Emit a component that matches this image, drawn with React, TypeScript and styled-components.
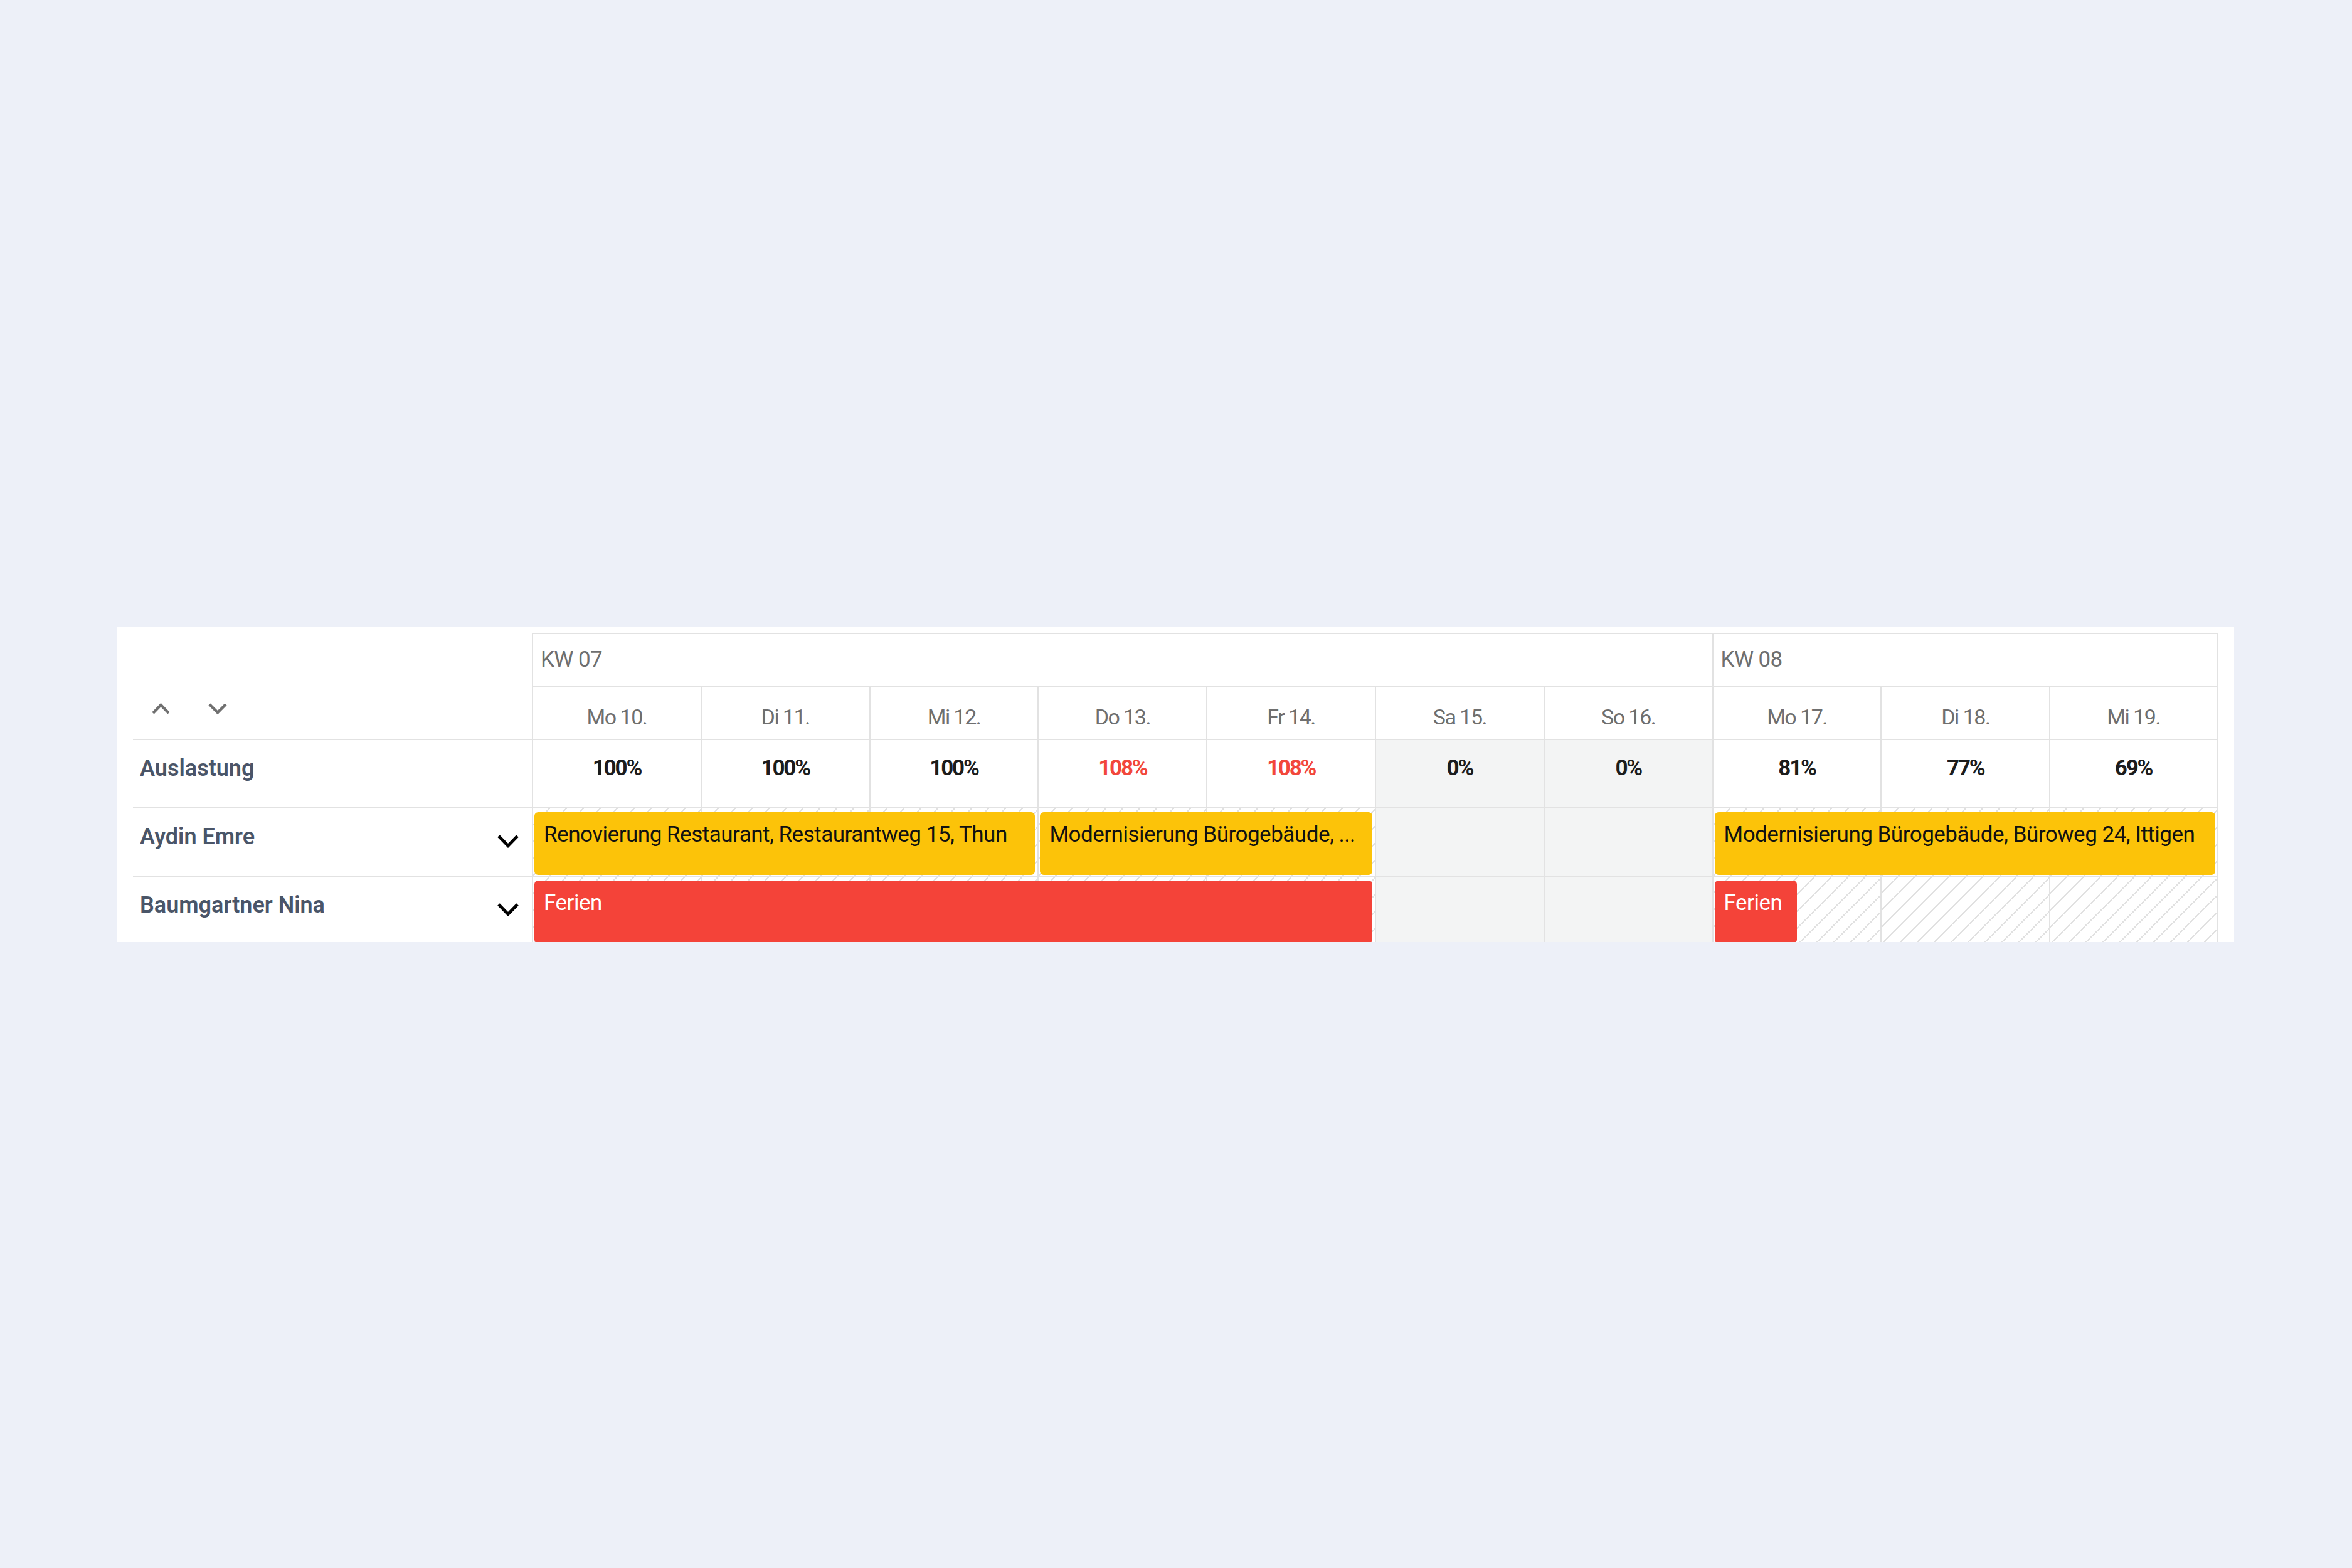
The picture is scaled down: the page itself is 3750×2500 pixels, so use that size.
import React from 'react';
import styled, { createGlobalStyle, css } from 'styled-components';

const LINE = '#e2e2e2';
const WEEKEND = '#f3f4f4';

const GlobalStyle = createGlobalStyle`
  html, body {
    margin: 0;
    padding: 0;
    background: #edf0f8;
  }
  body {
    font-family: Roboto, "Liberation Sans", Arial, sans-serif;
  }
`;

const Page = styled.div`
  box-sizing: border-box;
  min-height: 2500px;
  padding: 999px 188px 0 187px;
`;

const Panel = styled.section`
  box-sizing: border-box;
  background: #ffffff;
  height: 503px;
  overflow: hidden;
  padding: 10px 26px 0 25px;
`;

const Grid = styled.div`
  display: grid;
  grid-template-columns: 636px repeat(10, 268.8px);
  grid-template-rows: 86px 85px 109px 109px 109px;
`;

const Corner = styled.div`
  grid-column: 1;
  grid-row: 1 / span 2;
  box-sizing: border-box;
  border-bottom: 2px solid ${LINE};
  display: flex;
  align-items: flex-end;
  gap: 59px;
  padding: 0 0 38px 29px;
`;

const SortButton = styled.button`
  display: block;
  border: 0;
  padding: 0;
  margin: 0;
  background: none;
  cursor: pointer;
  line-height: 0;
  svg {
    display: block;
  }
`;

const WeekCell = styled.div<{ $start: number; $span: number; $last?: boolean }>`
  grid-row: 1;
  grid-column: ${(p) => p.$start} / span ${(p) => p.$span};
  box-sizing: border-box;
  border-top: 2px solid ${LINE};
  border-left: 2px solid ${LINE};
  border-bottom: 2px solid ${LINE};
  ${(p) =>
    p.$last &&
    css`
      border-right: 2px solid ${LINE};
    `}
  display: flex;
  align-items: center;
  padding-left: 12px;
  font-size: 35px;
  letter-spacing: -0.6px;
  line-height: 1.2;
  color: #6f6f6f;
`;

const DayCell = styled.div<{ $col: number; $last?: boolean }>`
  grid-row: 2;
  grid-column: ${(p) => p.$col};
  box-sizing: border-box;
  border-left: 2px solid ${LINE};
  border-bottom: 2px solid ${LINE};
  ${(p) =>
    p.$last &&
    css`
      border-right: 2px solid ${LINE};
    `}
  display: flex;
  align-items: center;
  justify-content: center;
  padding-top: 14px;
  font-size: 34px;
  letter-spacing: -1.5px;
  line-height: 1.2;
  color: #6f6f6f;
`;

const RowLabel = styled.div<{ $row: number }>`
  grid-row: ${(p) => p.$row};
  grid-column: 1;
  box-sizing: border-box;
  border-bottom: 2px solid ${LINE};
  display: flex;
  align-items: flex-start;
  justify-content: space-between;
  padding: 24px 20px 0 11px;
  font-size: 36px;
  line-height: 1.2;
  font-weight: 600;
  color: #4a5568;
`;

const ExpandButton = styled.button`
  display: block;
  border: 0;
  padding: 0;
  margin: 17px 0 0;
  background: none;
  cursor: pointer;
  line-height: 0;
  svg {
    display: block;
  }
`;

const Cell = styled.div<{ $row: number; $col: number; $weekend?: boolean; $hatch?: boolean; $last?: boolean }>`
  grid-row: ${(p) => p.$row};
  grid-column: ${(p) => p.$col};
  box-sizing: border-box;
  border-left: 2px solid ${LINE};
  border-bottom: 2px solid ${LINE};
  ${(p) =>
    p.$last &&
    css`
      border-right: 2px solid ${LINE};
    `}
  background: ${(p) =>
    p.$weekend
      ? WEEKEND
      : p.$hatch
      ? `repeating-linear-gradient(135deg, transparent 0 17.4px, #e1e1e1 17.4px 19.1px)`
      : '#ffffff'};
`;

const LoadCell = styled(Cell)<{ $over?: boolean }>`
  display: flex;
  align-items: flex-start;
  justify-content: center;
  padding-top: 24px;
  font-size: 35px;
  letter-spacing: -2.2px;
  line-height: 1.2;
  font-weight: 700;
  color: ${(p) => (p.$over ? '#f2473b' : '#1c1c1c')};
`;

const Bar = styled.div<{ $row: number; $col: number; $span: number; $tone: 'project' | 'absence'; $width?: number }>`
  grid-row: ${(p) => p.$row};
  grid-column: ${(p) => p.$col} / span ${(p) => p.$span};
  box-sizing: border-box;
  margin: 6px 4px 3px 4px;
  ${(p) =>
    p.$width &&
    css`
      width: ${p.$width}px;
      justify-self: start;
    `}
  border-radius: 6px;
  background: ${(p) => (p.$tone === 'project' ? '#fcc309' : '#f44339')};
  color: ${(p) => (p.$tone === 'project' ? '#111111' : '#ffffff')};
  padding: 15px 8px 0 15px;
  font-size: 35px;
  letter-spacing: -0.5px;
  line-height: 1.2;
  white-space: nowrap;
  overflow: hidden;
  text-overflow: ellipsis;
`;

const ChevronUp = ({ color }: { color: string }) => (
  <svg width="31" height="20" viewBox="0 0 31 20">
    <polyline points="3,17 15.5,4 28,17" fill="none" stroke={color} strokeWidth="4.5" />
  </svg>
);

const ChevronDown = ({ color }: { color: string }) => (
  <svg width="32" height="20" viewBox="0 0 32 20">
    <polyline points="3,3 16,16 29,3" fill="none" stroke={color} strokeWidth="4.5" />
  </svg>
);

const ExpandChevron = () => (
  <svg width="36" height="22" viewBox="0 0 36 22">
    <polyline points="3,3 18,18.5 33,3" fill="none" stroke="#000000" strokeWidth="5" />
  </svg>
);

type Day = { label: string; weekend: boolean; load: string; over: boolean };

const days: Day[] = [
  { label: 'Mo 10.', weekend: false, load: '100%', over: false },
  { label: 'Di 11.', weekend: false, load: '100%', over: false },
  { label: 'Mi 12.', weekend: false, load: '100%', over: false },
  { label: 'Do 13.', weekend: false, load: '108%', over: true },
  { label: 'Fr 14.', weekend: false, load: '108%', over: true },
  { label: 'Sa 15.', weekend: true, load: '0%', over: false },
  { label: 'So 16.', weekend: true, load: '0%', over: false },
  { label: 'Mo 17.', weekend: false, load: '81%', over: false },
  { label: 'Di 18.', weekend: false, load: '77%', over: false },
  { label: 'Mi 19.', weekend: false, load: '69%', over: false },
];

const people = ['Aydin Emre', 'Baumgartner Nina'];

type Booking = { row: number; col: number; span: number; tone: 'project' | 'absence'; text: string; width?: number };

const bookings: Booking[] = [
  { row: 4, col: 2, span: 3, tone: 'project', text: 'Renovierung Restaurant, Restaurantweg 15, Thun' },
  { row: 4, col: 5, span: 2, tone: 'project', text: 'Modernisierung Bürogebäude, ...' },
  { row: 4, col: 9, span: 3, tone: 'project', text: 'Modernisierung Bürogebäude, Büroweg 24, Ittigen' },
  { row: 5, col: 2, span: 5, tone: 'absence', text: 'Ferien' },
  { row: 5, col: 9, span: 1, tone: 'absence', text: 'Ferien', width: 131 },
];

export default function App() {
  return (
    <>
      <GlobalStyle />
      <Page>
        <Panel>
          <Grid>
            <Corner>
              <SortButton aria-label="Nach oben">
                <ChevronUp color="#707070" />
              </SortButton>
              <SortButton aria-label="Nach unten">
                <ChevronDown color="#707070" />
              </SortButton>
            </Corner>

            <WeekCell $start={2} $span={7}>KW 07</WeekCell>
            <WeekCell $start={9} $span={3} $last>
              KW 08
            </WeekCell>

            {days.map((d, i) => (
              <DayCell key={d.label} $col={i + 2} $last={i === days.length - 1}>
                {d.label}
              </DayCell>
            ))}

            <RowLabel $row={3}>Auslastung</RowLabel>
            {days.map((d, i) => (
              <LoadCell key={d.label} $row={3} $col={i + 2} $weekend={d.weekend} $over={d.over} $last={i === days.length - 1}>
                {d.load}
              </LoadCell>
            ))}

            {people.map((name, pi) => (
              <React.Fragment key={name}>
                <RowLabel $row={4 + pi}>
                  <span>{name}</span>
                  <ExpandButton aria-label="Aufklappen">
                    <ExpandChevron />
                  </ExpandButton>
                </RowLabel>
                {days.map((d, i) => (
                  <Cell
                    key={d.label}
                    $row={4 + pi}
                    $col={i + 2}
                    $weekend={d.weekend}
                    $hatch={!d.weekend}
                    $last={i === days.length - 1}
                  />
                ))}
              </React.Fragment>
            ))}

            {bookings.map((b, i) => (
              <Bar key={i} $row={b.row} $col={b.col} $span={b.span} $tone={b.tone} $width={b.width}>
                {b.text}
              </Bar>
            ))}
          </Grid>
        </Panel>
      </Page>
    </>
  );
}
